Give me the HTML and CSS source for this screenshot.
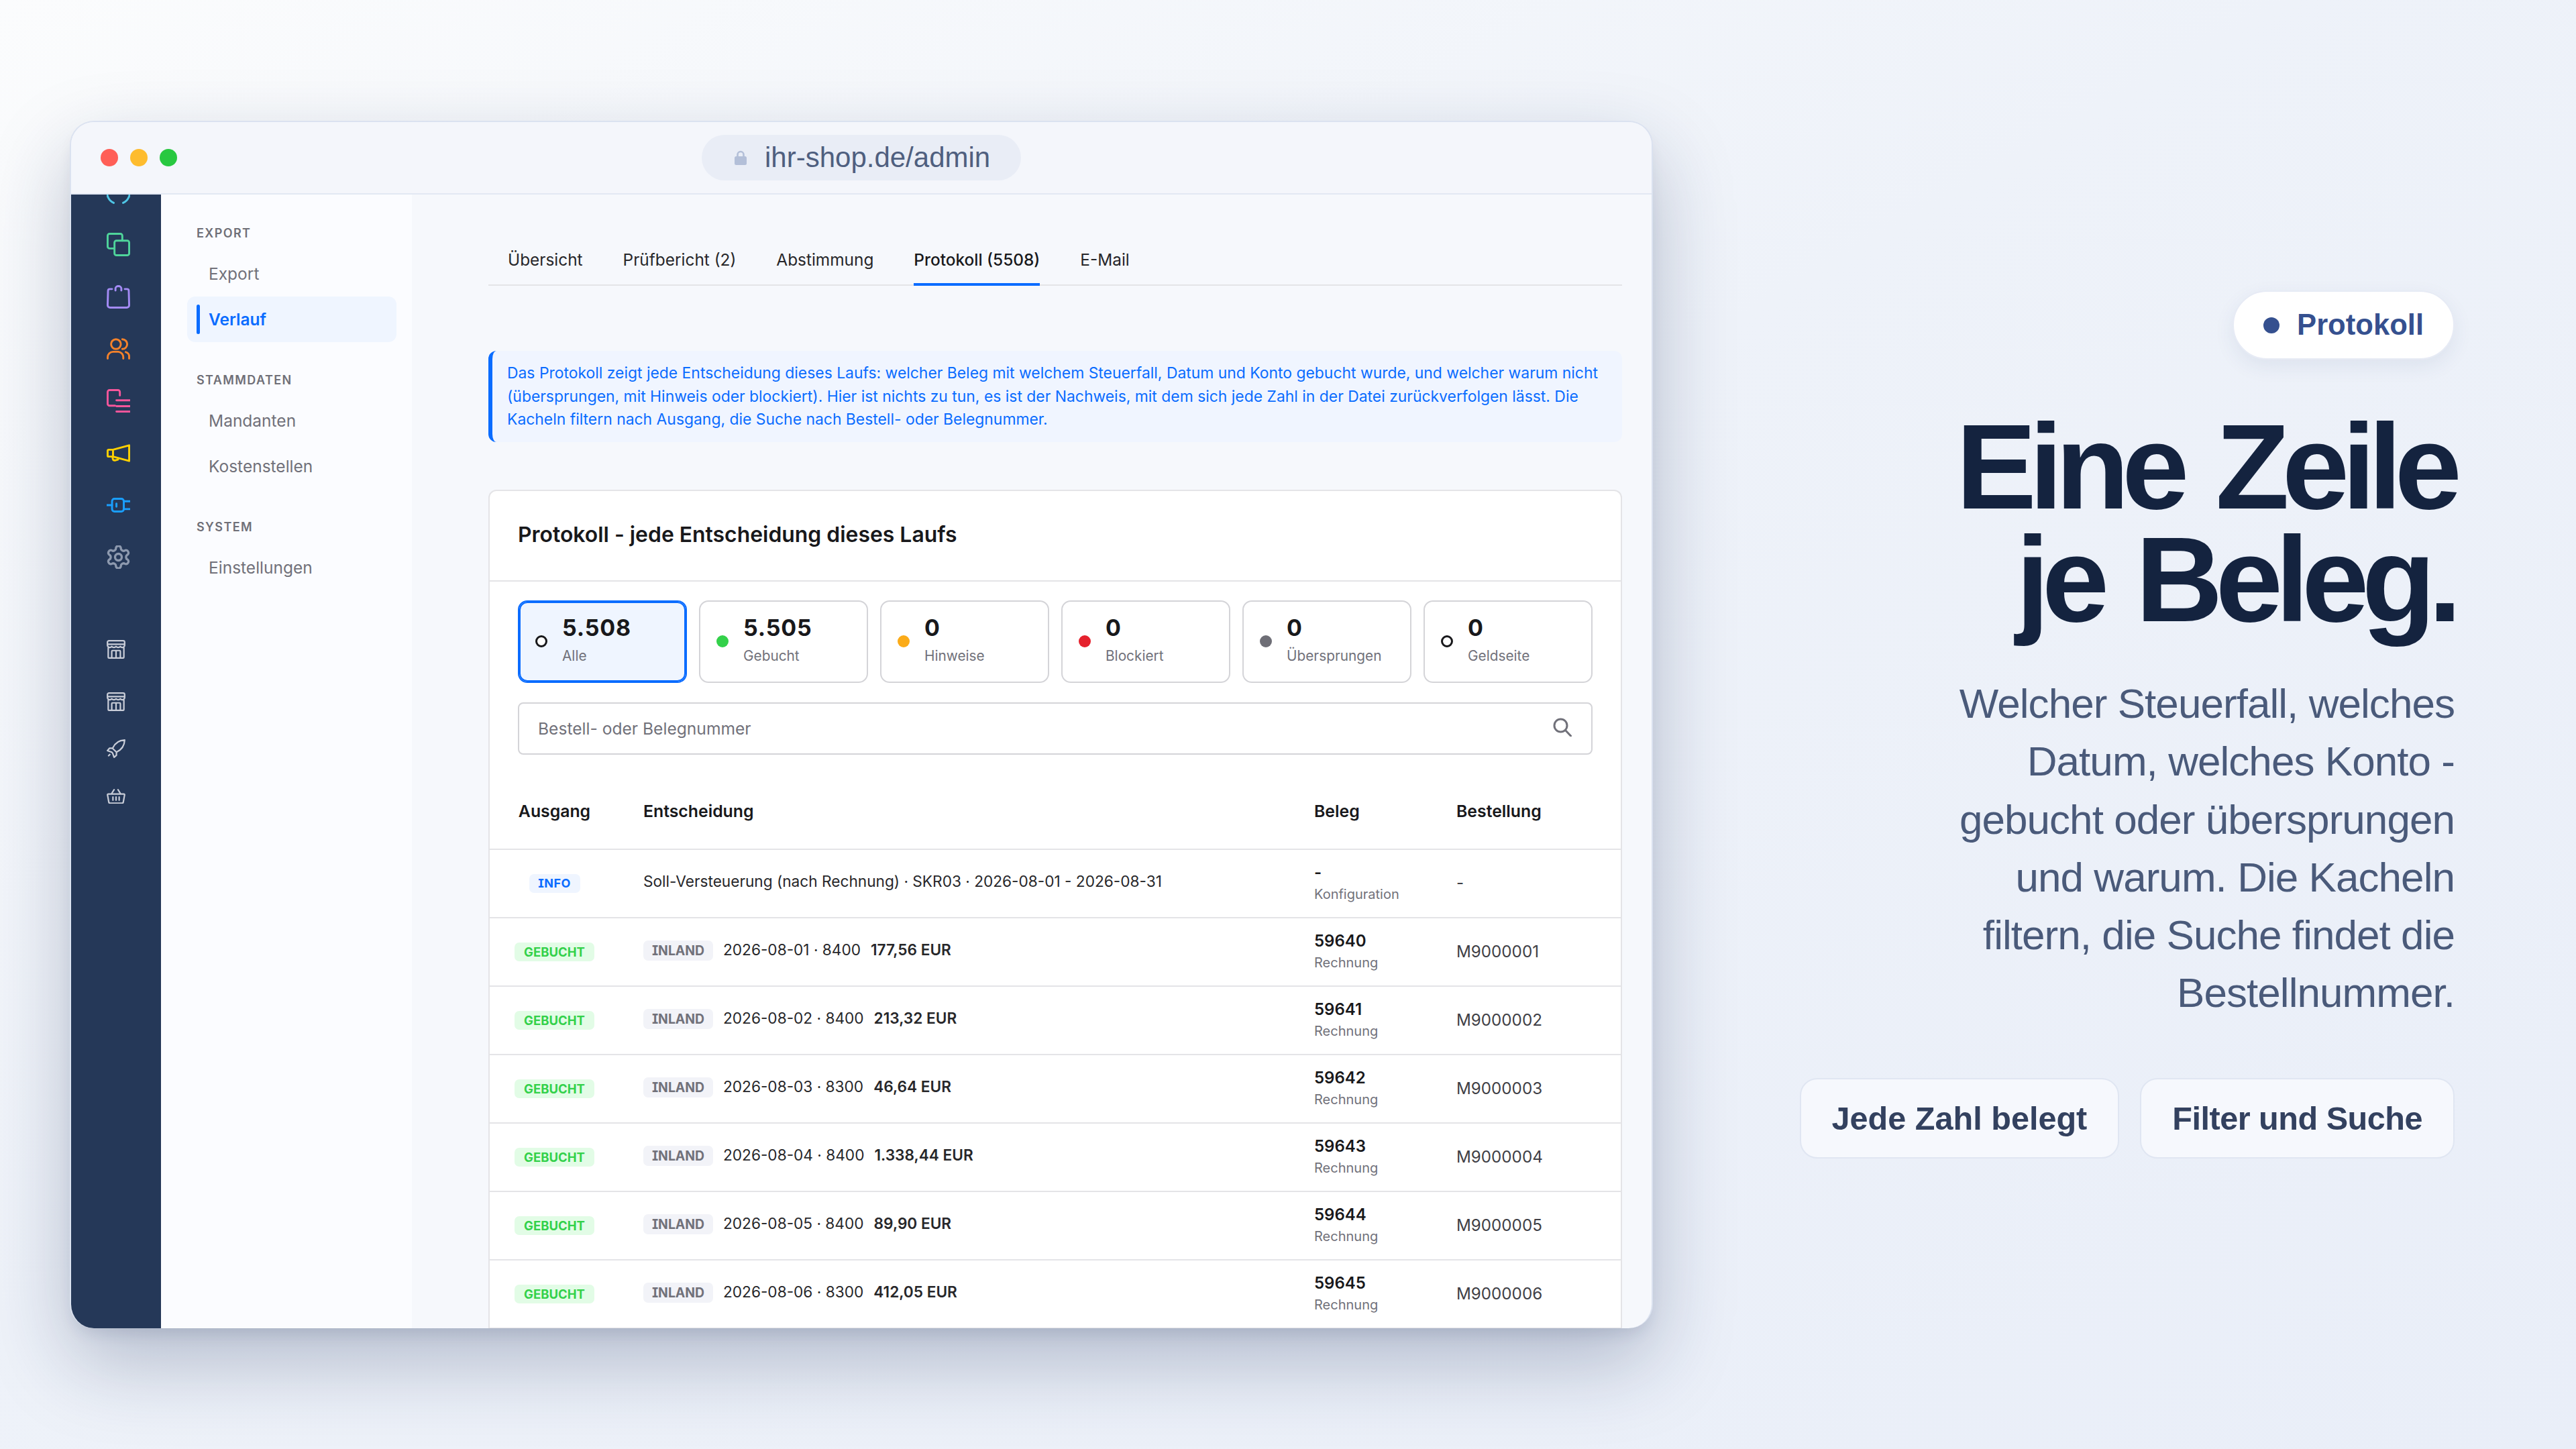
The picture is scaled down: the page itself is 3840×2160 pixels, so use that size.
FILE: index.html
```html
<!DOCTYPE html>
<html lang="de">
<head>
<meta charset="utf-8">
<title>Protokoll</title>
<link rel="stylesheet" href="styles.css">
</head>
<body>
<div class="stage">
  <section class="window">
    <header class="titlebar">
      <div class="lights"><i class="light red"></i><i class="light amber"></i><i class="light green"></i></div>
      <div class="url">
        <svg class="lock" viewBox="0 0 18 22"><path d="M4.500 10V6.500a4.500 4.500 0 0 1 9 0V10" fill="none" stroke="#b3bfd8" stroke-width="2.600"/><rect x="0" y="9" width="18" height="13" rx="2.500" fill="#b3bfd8"/></svg>
        <span>ihr-shop.de/admin</span>
      </div>
    </header>
    <div class="app">
      <nav class="rail">
        <div class="rail-top">
          <div class="ri"><svg class="i35" viewBox="0 0 24 24" stroke="#4fc6e6"><path d="M1 9.500a11 11 0 0 0 6.200 13.400M23 9.500a11 11 0 0 1-6.200 13.400M12 10.500v1.200"/></svg></div>
          <div class="ri"><svg class="i35" viewBox="0 0 24 24" stroke="#4fd49b"><rect x="8" y="8" width="15" height="15" rx="2"/><path d="M8 16H3a2 2 0 0 1-2-2V3a2 2 0 0 1 2-2h11a2 2 0 0 1 2 2v5"/></svg></div>
          <div class="ri"><svg class="i35" viewBox="0 0 24 24" stroke="#a48bf5"><path d="M5.500 4H3.200a1.800 1.800 0 0 0-1.800 1.800L1 20.600A2.400 2.400 0 0 0 3.400 23h17.200a2.400 2.400 0 0 0 2.400-2.400l-.4-14.800A1.800 1.800 0 0 0 20.800 4h-2.300"/><path d="M9 5.500V3.500a3 2.500 0 0 1 6 0v2"/></svg></div>
          <div class="ri"><svg class="i35 h32" viewBox="0 0 24 22" stroke="#f5822a"><circle cx="9.500" cy="6.200" r="5"/><path d="M16 1.200a5 5 0 0 1 0 10M1 21v-1.500A5.500 5.500 0 0 1 6.500 14h5.500a5.500 5.500 0 0 1 5 5.500V21M19.500 14.300a4.500 4.500 0 0 1 3.500 4.500V21"/></svg></div>
          <div class="ri"><svg class="i35" viewBox="0 0 24 24" stroke="#f5569b"><path d="M13.500 6.500V3a2 2 0 0 0-2-2H3a2 2 0 0 0-2 2v12a2 2 0 0 0 2 2h5.500M10 11.500h14M10 17.500h14M10 23h14"/></svg></div>
          <div class="ri"><svg class="i35 h27" viewBox="0 0 24 18" stroke="#ffd000"><path d="M6.500 5.500l16.500-4.500v16l-16.500-4.500H2a1 1 0 0 1-1-1V6.500a1 1 0 0 1 1-1zM6.500 5.500v7M6 12.800l.3 2a2 2 0 0 0 2.200 1.600l3-.8"/></svg></div>
          <div class="ri"><svg class="i35 h22" viewBox="0 0 24 15" stroke="#1a9fff"><rect x="5.500" y="1" width="12" height="13" rx="2.500"/><path d="M0 7.500h5.500M17.500 3.500H24M17.500 11.500H24M10 6v3"/></svg></div>
          <div class="ri"><svg class="i35" viewBox="1.500 1.500 21 21" stroke="#8d99ae"><path d="M12.220 2h-.44a2 2 0 0 0-2 2v.18a2 2 0 0 1-1 1.730l-.43.250a2 2 0 0 1-2 0l-.15-.080a2 2 0 0 0-2.730.730l-.22.380a2 2 0 0 0 .730 2.730l.15.100a2 2 0 0 1 1 1.720v.510a2 2 0 0 1-1 1.740l-.15.090a2 2 0 0 0-.730 2.730l.22.380a2 2 0 0 0 2.730.730l.15-.080a2 2 0 0 1 2 0l.43.250a2 2 0 0 1 1 1.730V20a2 2 0 0 0 2 2h.44a2 2 0 0 0 2-2v-.18a2 2 0 0 1 1-1.730l.43-.25a2 2 0 0 1 2 0l.15.080a2 2 0 0 0 2.730-.730l.22-.390a2 2 0 0 0-.730-2.730l-.15-.080a2 2 0 0 1-1-1.740v-.5a2 2 0 0 1 1-1.740l.15-.090a2 2 0 0 0 .730-2.730l-.22-.380a2 2 0 0 0-2.730-.730l-.15.080a2 2 0 0 1-2 0l-.43-.25a2 2 0 0 1-1-1.730V4a2 2 0 0 0-2-2z"/><circle cx="12" cy="12" r="3"/></svg></div>
        </div>
        <div class="rail-bottom">
          <svg class="i28 m-store1" viewBox="0 0 24 24"><path d="M2 10v12a1 1 0 0 0 1 1h18a1 1 0 0 0 1-1V10M3 1h18a2 2 0 0 1 2 2v3.500a3 3 0 0 1-5.500 1.700 3.500 3.500 0 0 1-5.500 0 3.500 3.500 0 0 1-5.500 0A3 3 0 0 1 1 6.500V3a2 2 0 0 1 2-2zM1 5.500h22M6.500 23V14.500a1 1 0 0 1 1-1h9a1 1 0 0 1 1 1V23M12 13.500V23"/></svg>
          <svg class="i28 m-store2" viewBox="0 0 24 24"><path d="M2 10v12a1 1 0 0 0 1 1h18a1 1 0 0 0 1-1V10M3 1h18a2 2 0 0 1 2 2v3.500a3 3 0 0 1-5.500 1.700 3.500 3.500 0 0 1-5.500 0 3.500 3.500 0 0 1-5.500 0A3 3 0 0 1 1 6.500V3a2 2 0 0 1 2-2zM1 5.500h22M6.500 23V14.500a1 1 0 0 1 1-1h9a1 1 0 0 1 1 1V23M12 13.500V23"/></svg>
          <svg class="i28 m-rocket" viewBox="0 0 24 24"><path d="M23 1c-7.500.3-12.500 4-15.500 10.500l5 5C19 13.500 22.700 8.500 23 1zM7.500 11.500H3.500L1 14.500l5.500 2M12.500 16.500v4L9.500 23l-2-5.500M6.500 16.500l1 1M4 19.500l-1.500 1.500"/></svg>
          <svg class="i28 h22 m-basket" viewBox="0 0 24 19"><path d="M2 6.500h20a1 1 0 0 1 1 1.200l-1.600 8.900a2 2 0 0 1-2 1.900H4.600a2 2 0 0 1-2-1.900L1 7.700a1 1 0 0 1 1-1.200zM6 6.500L9.500 1M18 6.500L14.500 1M8 10.500v4M12 10.500v4M16 10.500v4"/></svg>
        </div>
      </nav>
      <aside class="subnav">
        <div class="group">
          <div class="group-label">EXPORT</div>
          <a class="item">Export</a>
          <a class="item active">Verlauf</a>
        </div>
        <div class="group">
          <div class="group-label">STAMMDATEN</div>
          <a class="item">Mandanten</a>
          <a class="item">Kostenstellen</a>
        </div>
        <div class="group">
          <div class="group-label">SYSTEM</div>
          <a class="item">Einstellungen</a>
        </div>
      </aside>
      <main class="main">
        <div class="tabs">
          <a class="tab">Übersicht</a>
          <a class="tab">Prüfbericht (2)</a>
          <a class="tab">Abstimmung</a>
          <a class="tab current">Protokoll (5508)</a>
          <a class="tab">E-Mail</a>
        </div>
        <p class="alert">Das Protokoll zeigt jede Entscheidung dieses Laufs: welcher Beleg mit welchem Steuerfall, Datum und Konto gebucht wurde, und welcher warum nicht (übersprungen, mit Hinweis oder blockiert). Hier ist nichts zu tun, es ist der Nachweis, mit dem sich jede Zahl in der Datei zurückverfolgen lässt. Die Kacheln filtern nach Ausgang, die Suche nach Bestell- oder Belegnummer.</p>
        <section class="card">
          <h2 class="card-title">Protokoll - jede Entscheidung dieses Laufs</h2>
          <div class="filters">
            <div class="tiles">
              <div class="tile selected"><i class="dot open"></i><div><b>5.508</b><span>Alle</span></div></div>
              <div class="tile"><i class="dot ok"></i><div><b>5.505</b><span>Gebucht</span></div></div>
              <div class="tile"><i class="dot warn"></i><div><b>0</b><span>Hinweise</span></div></div>
              <div class="tile"><i class="dot stop"></i><div><b>0</b><span>Blockiert</span></div></div>
              <div class="tile"><i class="dot skip"></i><div><b>0</b><span>Übersprungen</span></div></div>
              <div class="tile"><i class="dot open"></i><div><b>0</b><span>Geldseite</span></div></div>
            </div>
            <div class="search">
              <span>Bestell- oder Belegnummer</span>
              <svg class="search-icon" viewBox="0 0 28 28"><circle cx="11.500" cy="11.500" r="9.500"/><path d="M18.500 18.500L26.500 27"/></svg>
            </div>
          </div>
          <div class="row head">
            <div class="c1">Ausgang</div><div>Entscheidung</div><div>Beleg</div><div>Bestellung</div>
          </div>
          <div class="row">
            <div class="c1"><span class="badge info">INFO</span></div>
            <div class="decision first"><span>Soll-Versteuerung (nach Rechnung) · SKR03 · 2026-08-01 - 2026-08-31</span></div>
            <div class="doc"><b>-</b><small>Konfiguration</small></div>
            <div class="order">-</div>
          </div>
          <div class="row">
            <div class="c1"><span class="badge booked">GEBUCHT</span></div>
            <div class="decision"><span class="badge land">INLAND</span><span>2026-08-01 · 8400</span><b>177,56 EUR</b></div>
            <div class="doc"><b>59640</b><small>Rechnung</small></div>
            <div class="order">M9000001</div>
          </div>
          <div class="row">
            <div class="c1"><span class="badge booked">GEBUCHT</span></div>
            <div class="decision"><span class="badge land">INLAND</span><span>2026-08-02 · 8400</span><b>213,32 EUR</b></div>
            <div class="doc"><b>59641</b><small>Rechnung</small></div>
            <div class="order">M9000002</div>
          </div>
          <div class="row">
            <div class="c1"><span class="badge booked">GEBUCHT</span></div>
            <div class="decision"><span class="badge land">INLAND</span><span>2026-08-03 · 8300</span><b>46,64 EUR</b></div>
            <div class="doc"><b>59642</b><small>Rechnung</small></div>
            <div class="order">M9000003</div>
          </div>
          <div class="row">
            <div class="c1"><span class="badge booked">GEBUCHT</span></div>
            <div class="decision"><span class="badge land">INLAND</span><span>2026-08-04 · 8400</span><b>1.338,44 EUR</b></div>
            <div class="doc"><b>59643</b><small>Rechnung</small></div>
            <div class="order">M9000004</div>
          </div>
          <div class="row">
            <div class="c1"><span class="badge booked">GEBUCHT</span></div>
            <div class="decision"><span class="badge land">INLAND</span><span>2026-08-05 · 8400</span><b>89,90 EUR</b></div>
            <div class="doc"><b>59644</b><small>Rechnung</small></div>
            <div class="order">M9000005</div>
          </div>
          <div class="row">
            <div class="c1"><span class="badge booked">GEBUCHT</span></div>
            <div class="decision"><span class="badge land">INLAND</span><span>2026-08-06 · 8300</span><b>412,05 EUR</b></div>
            <div class="doc"><b>59645</b><small>Rechnung</small></div>
            <div class="order">M9000006</div>
          </div>
        </section>
      </main>
    </div>
  </section>
  <aside class="pitch">
    <div class="kicker"><i></i><span>Protokoll</span></div>
    <h1>Eine Zeile<br>je Beleg.</h1>
    <p>Welcher Steuerfall, welches Datum, welches Konto - gebucht oder übersprungen und warum. Die Kacheln filtern, die Suche findet die Bestellnummer.</p>
    <div class="chips"><span class="chip">Jede Zahl belegt</span><span class="chip tight">Filter und Suche</span></div>
  </aside>
</div>
</body>
</html>
```
FILE: styles.css
```css
* { box-sizing: border-box; }
html, body { margin: 0; padding: 0; }
html { overflow: hidden; }
body {
  width: 3840px;
  height: 2160px;
  overflow: hidden;
  font-family: Inter, "Liberation Sans", sans-serif;
  color: #18181b;
  background: linear-gradient(150deg, #fbfcfd 0%, #eef2f9 45%, #e9eef8 100%);
}
.stage { display: flex; justify-content: space-between; align-items: flex-start; height: 100%; }

/* browser window */
.window {
  width: 2360px;
  height: 1800px;
  margin: 180px 0 0 104px;
  display: flex;
  flex-direction: column;
  background: #f6f8fc;
  border: 2px solid #dbe2f0;
  border-bottom: 0;
  border-radius: 36px;
  overflow: hidden;
  box-shadow: 0 50px 120px rgba(24, 40, 84, .27), 0 14px 24px -8px rgba(24, 40, 84, .12);
}
.titlebar {
  flex: none;
  height: 108px;
  display: flex;
  align-items: center;
  justify-content: center;
  position: relative;
  background: #f4f6fb;
  border-bottom: 2px solid #e2e8f3;
}
.lights { position: absolute; left: 44px; top: 40px; display: flex; gap: 18px; }
.light { width: 26px; height: 26px; border-radius: 50%; }
.red { background: #ff5f57; }
.amber { background: #febc2e; }
.green { background: #28c840; }
.url {
  height: 68px;
  width: 476px;
  padding-left: 49px;
  display: flex;
  align-items: center;
  gap: 27px;
  border-radius: 34px;
  background: #e9edf6;
  font: 400 42px "Liberation Sans", sans-serif;
  color: #4f5f7f;
}
.lock { width: 18px; height: 22px; flex: none; }

.app { flex: 1; min-height: 0; display: flex; }

/* icon rail */
.rail { flex: none; width: 134px; background: #253858; padding-left: 53px; overflow: hidden; }
.rail-top { margin-top: -42px; }
.ri { height: 77.7px; display: flex; align-items: center; }
.rail svg { fill: none; stroke-width: 2; stroke-linecap: round; stroke-linejoin: round; display: block; }
.i35 { width: 35px; height: 35px; }
.i35.h32 { height: 32px; }
.i35.h27 { height: 27px; }
.i35.h22 { height: 22px; }
.i28 { width: 28px; height: 28px; stroke: #c9cdd8; }
.i28.h22 { height: 22px; }
.rail-bottom svg { stroke-width: 1.900; }
.m-store1 { margin-top: 84px; }
.m-store2 { margin-top: 50px; }
.m-rocket { margin-top: 42px; }
.m-basket { margin-top: 46px; }

/* sub navigation */
.subnav { flex: none; width: 374px; background: #fbfcff; padding: 43px 23px 0 39px; }
.group { margin-bottom: 42px; }
.group-label {
  height: 30px;
  line-height: 30px;
  margin-bottom: 11px;
  padding-left: 14px;
  font-size: 18px;
  font-weight: 600;
  letter-spacing: 1.400px;
  color: #6f6f77;
}
.item {
  display: flex;
  align-items: center;
  height: 68px;
  padding-left: 32px;
  font-size: 24.500px;
  color: #71717a;
  border-radius: 12px;
}
.item.active { position: relative; background: #eff5ff; color: #0a6cff; font-weight: 600; }
.item.active::before {
  content: "";
  position: absolute;
  left: 14px;
  top: 12px;
  bottom: 12px;
  width: 5px;
  border-radius: 3px;
  background: #0a6cff;
}

/* main */
.main { flex: 1; min-width: 0; padding: 82px 44px 0 114px; overflow: hidden; }
.tabs { display: flex; gap: 60px; padding-left: 29px; border-bottom: 2px solid #e4e4e7; height: 54px; }
.tab { height: 54px; font-size: 24.400px; line-height: 30px; white-space: nowrap; color: #27272a; }
.tab.current { border-bottom: 4px solid #0a6cff; color: #18181b; font-weight: 500; }
.alert {
  margin: 97px 0 0;
  padding: 16px 29px 16px 22px;
  font-size: 22.900px;
  line-height: 34.500px;
  color: #0a6cff;
  background: #f0f5ff;
  border-left: 6px solid #0a6cff;
  border-radius: 12px;
}
.card {
  margin-top: 71px;
  background: #fff;
  border: 2px solid #e4e4e7;
  border-bottom: 0;
  border-radius: 12px 12px 0 0;
}
.card-title {
  margin: 0;
  height: 135px;
  padding: 0 0 3px 42px;
  display: flex;
  align-items: center;
  font-size: 31.900px;
  font-weight: 600;
  border-bottom: 2px solid #e4e4e7;
}
.filters { padding: 28px 42px 0; }
.tiles { display: grid; grid-template-columns: repeat(6, 1fr); gap: 18px; }
.tile {
  height: 123px;
  display: flex;
  align-items: center;
  gap: 22px;
  padding-left: 24px;
  border: 2px solid #d4d4d8;
  border-radius: 14px;
  background: #fff;
}
.tile.selected { background: #eff5ff; border-color: #0a6cff; box-shadow: inset 0 0 0 2px #0a6cff; }
.tile b { display: block; font-size: 34px; letter-spacing: .800px; line-height: 44px; font-weight: 700; }
.tile span { display: block; font-size: 20.800px; line-height: 40px; color: #71717a; }
.dot { width: 18px; height: 18px; border-radius: 50%; flex: none; }
.dot.open { background: #fff; border: 3px solid #18181b; }
.dot.ok { background: #33d14a; }
.dot.warn { background: #fbab18; }
.dot.stop { background: #e5212d; }
.dot.skip { background: #6e6e76; }
.search {
  margin-top: 29px;
  height: 78px;
  display: flex;
  align-items: center;
  justify-content: space-between;
  padding: 0 29px 0 28px;
  border: 2px solid #d4d4d8;
  border-radius: 8px;
  font-size: 24.600px;
  color: #71717a;
}
.search-icon { width: 28px; height: 28px; fill: none; stroke: #71717a; stroke-width: 3; stroke-linecap: round; margin-top: -4px; }

.row {
  display: grid;
  grid-template-columns: 186px 1000px 212px 1fr;
  align-items: center;
  height: 102px;
  padding-left: 43px;
  border-bottom: 2px solid #e4e4e7;
  font-size: 24px;
}
.row.head { margin-top: 32px; height: 110px; padding-bottom: 3px; font-size: 24.800px; font-weight: 600; }
.c1 { width: 107px; display: flex; justify-content: center; white-space: nowrap; }
.badge {
  display: inline-flex;
  align-items: center;
  justify-content: center;
  flex: none;
  border-radius: 7px;
  font-weight: 700;
  font-feature-settings: "cv08";
}
.info { width: 76px; height: 28px; background: #eff5ff; color: #0a6cff; font-size: 18px; letter-spacing: .500px; }
.booked { width: 119px; height: 28px; background: #e2fce6; color: #33d14a; font-size: 18.500px; }
.land { width: 104px; height: 30px; background: #f2f3f8; color: #71717a; font-size: 19.400px; }
.decision { display: flex; align-items: baseline; gap: 15px; font-size: 22.650px; color: #27272a; padding-bottom: 4px; white-space: nowrap; }
.decision.first { padding-bottom: 6px; }
.decision b { font-weight: 600; }
.doc { padding-top: 3px; }
.doc b { display: block; font-size: 24px; font-weight: 600; line-height: 30px; }
.doc small { display: block; font-size: 20px; line-height: 34px; color: #71717a; }
.order { font-size: 24.200px; color: #3f3f46; padding-bottom: 1px; }

/* pitch */
.pitch {
  width: 1000px;
  margin: 433px 181px 0 0;
  display: flex;
  flex-direction: column;
  align-items: flex-end;
  text-align: right;
  font-family: "Liberation Sans", Arial, sans-serif;
}
.kicker {
  height: 103px;
  display: flex;
  align-items: center;
  gap: 26px;
  padding: 0 44px;
  background: #fff;
  border: 2px solid #e7ebf5;
  border-radius: 52px;
  box-shadow: 0 10px 30px rgba(40, 60, 110, .08);
  font-size: 43.600px;
  font-weight: 700;
  color: #35508f;
}
.kicker i { width: 24px; height: 24px; border-radius: 50%; background: #35508f; }
.pitch h1 {
  margin: 76px 0 0;
  font-size: 180px;
  line-height: 167.500px;
  letter-spacing: -10.800px;
  word-spacing: 11px;
  font-weight: 700;
  color: #14233f;
}
.pitch p {
  width: 780px;
  margin: 59px 0 0;
  font-size: 62px;
  line-height: 86.300px;
  letter-spacing: -.950px;
  color: #4a5a7a;
}
.chips { display: flex; gap: 31px; margin-top: 83px; }
.chip {
  height: 120px;
  display: flex;
  align-items: center;
  padding: 0 46px;
  font-size: 48.600px;
  font-weight: 700;
  color: #33415f;
  background: #f6f8fd;
  border: 2px solid #e0e6f2;
  border-radius: 26px;
}
.chip.tight { letter-spacing: -.500px; }
```
